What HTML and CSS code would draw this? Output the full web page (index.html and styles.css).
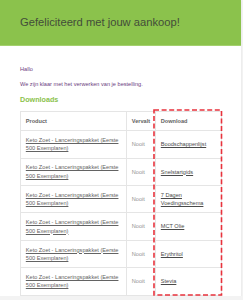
FILE: index.html
```html
<!DOCTYPE html>
<html lang="nl">

<head>
  <meta charset="UTF-8" />
  <title>Gefeliciteerd met jouw aankoop!</title>
  <link rel="stylesheet" href="styles.css">
</head>

<body>
  <div class="email">
    <div class="email-header">
      <h1>Gefeliciteerd met jouw aankoop!</h1>
    </div>

    <div class="email-body">
      <p>Hallo</p>
      <p>We zijn klaar met het verwerken van je bestelling.</p>

      <h2>Downloads</h2>

      <table class="downloads">
        <colgroup>
          <col class="col-product">
          <col class="col-expires">
          <col class="col-download">
        </colgroup>
        <thead>
          <tr>
            <th>Product</th>
            <th>Vervalt</th>
            <th>Download</th>
          </tr>
        </thead>
        <tbody>
          <tr>
            <td><a href="#">Keto Zoet - Lanceringspakket (Eerste 500 Exemplaren)</a></td>
            <td class="expires">Nooit</td>
            <td><a class="file" href="#">Boodschappenlijst</a></td>
          </tr>
          <tr>
            <td><a href="#">Keto Zoet - Lanceringspakket (Eerste 500 Exemplaren)</a></td>
            <td class="expires">Nooit</td>
            <td><a class="file" href="#">Snelstartgids</a></td>
          </tr>
          <tr>
            <td><a href="#">Keto Zoet - Lanceringspakket (Eerste 500 Exemplaren)</a></td>
            <td class="expires">Nooit</td>
            <td><a class="file" href="#">7 Dagen Voedingsschema</a></td>
          </tr>
          <tr>
            <td><a href="#">Keto Zoet - Lanceringspakket (Eerste 500 Exemplaren)</a></td>
            <td class="expires">Nooit</td>
            <td><a class="file" href="#">MCT Olie</a></td>
          </tr>
          <tr>
            <td><a href="#">Keto Zoet - Lanceringspakket (Eerste 500 Exemplaren)</a></td>
            <td class="expires">Nooit</td>
            <td><a class="file" href="#">Erythritol</a></td>
          </tr>
          <tr>
            <td><a href="#">Keto Zoet - Lanceringspakket (Eerste 500 Exemplaren)</a></td>
            <td class="expires">Nooit</td>
            <td><a class="file" href="#">Stevia</a></td>
          </tr>
        </tbody>
      </table>
    </div>

    <svg class="highlight" width="72" height="190" viewBox="0 0 72 190">
      <rect x="1" y="1" width="67.5" height="185" fill="none" stroke="#e8323c" stroke-width="1.6" stroke-dasharray="5 2.6" />
    </svg>
  </div>
</body>

</html>
```

FILE: styles.css
```css
body {
  margin: 0;
  background-color: #f3f3f3;
  font-family: 'Liberation Sans', Arial, sans-serif;
}

.email {
  position: relative;
  width: 241px;
  height: 296px;
  overflow: hidden;
  background: white;
  box-shadow: 0 1px 2px rgba(0, 0, 0, 0.08);
}

.email-header {
  background-color: #8bc24c;
  padding: 14px 19px 14px 20px;
  border-bottom: 1px solid #a4d06e;
}

.email-header h1 {
  margin: 0;
  font-family: 'Liberation Sans', Arial, sans-serif;
  font-size: 11.2px;
  font-weight: 400;
  line-height: 17px;
  color: #434d3a;
}

.email-body {
  padding: 19px 20px 0 20px;
}

.email-body p {
  margin: 0 0 6.4px;
  font-size: 5.6px;
  line-height: 8.4px;
  color: #6b3d80;
}

.email-body h2 {
  margin: 0 0 7.2px;
  font-size: 7.2px;
  line-height: 9.4px;
  font-weight: 700;
  color: #8bc24c;
}

.downloads {
  width: 201.6px;
  border: 1px solid #e5e5e5;
  border-collapse: collapse;
  table-layout: fixed;
  font-size: 5.6px;
  line-height: 8.4px;
  color: #636363;
}

.col-product {
  width: 106px;
}

.col-expires {
  width: 29px;
}

.downloads th,
.downloads td {
  padding: 4.8px;
  border: 1px solid #e5e5e5;
  text-align: left;
  vertical-align: middle;
}

.downloads th {
  font-weight: 700;
}

.downloads a {
  color: #636363;
}

.downloads .expires {
  color: #929292;
}

.downloads a.file {
  color: #4a4a4a;
}

.highlight {
  position: absolute;
  left: 152.5px;
  top: 108.5px;
}
```
